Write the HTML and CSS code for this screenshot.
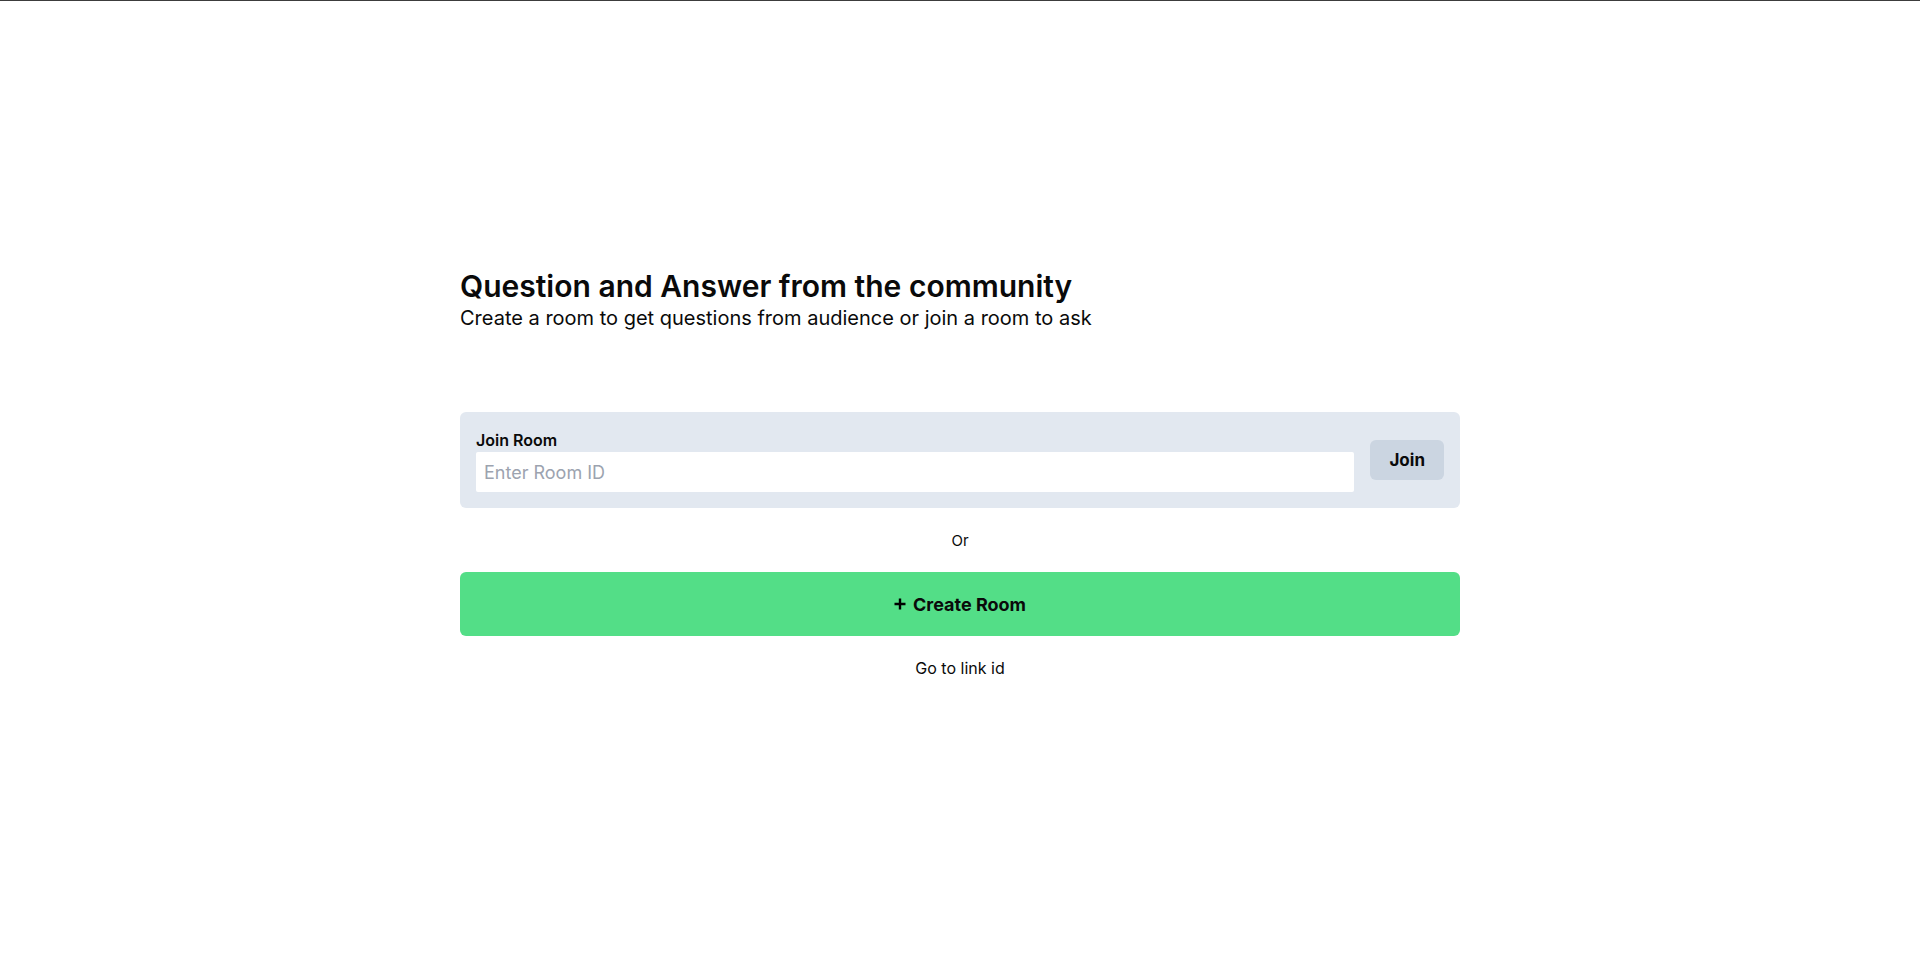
FILE: index.html
```html
<!DOCTYPE html>
<html lang="en">
<head>
<meta charset="utf-8">
<title>Q&amp;A</title>
<link rel="stylesheet" href="styles.css">
</head>
<body>
<main class="page">
  <div class="container">
    <header class="hero">
      <h1 class="title">Question and Answer from the community</h1>
      <p class="subtitle">Create a room to get questions from audience or join a room to ask</p>
    </header>
    <form class="card">
      <div class="field">
        <label class="label" for="room">Join Room</label>
        <input class="input" id="room" type="text" placeholder="Enter Room ID">
      </div>
      <button class="join" type="button">Join</button>
    </form>
    <p class="or">Or</p>
    <button class="create" type="button">
      <svg class="plus" width="12" height="12" viewBox="0 0 12 12"><path d="M6 0.5v11M0.5 6h11" stroke="#000" stroke-width="2.4" fill="none"/></svg>
      <span>Create Room</span>
    </button>
    <a class="link" href="#">Go to link id</a>
  </div>
</main>
</body>
</html>
```

FILE: styles.css
```css
* { box-sizing: border-box; }
html, body { margin: 0; padding: 0; }
body {
  border-top: 1px solid #3c3c3c;
  background: #fff;
  color: #0a0a0a;
  font-family: Inter, "Noto Sans", "Liberation Sans", sans-serif;
}
.page {
  min-height: 961px;
  display: flex;
  justify-content: center;
  padding-top: 267px;
}
.container {
  width: 1000px;
  display: flex;
  flex-direction: column;
}
.hero { margin-bottom: 80px; }
.title {
  margin: 0;
  font-size: 30px;
  line-height: 36px;
  font-weight: 600;
}
.subtitle {
  margin: 0;
  font-size: 20px;
  line-height: 28px;
}
.card {
  margin: 0;
  display: flex;
  align-items: center;
  gap: 16px;
  padding: 16px;
  background: #e2e8f0;
  border-radius: 6px;
}
.field { flex: 1; display: flex; flex-direction: column; }
.label {
  font-size: 16px;
  line-height: 24px;
  font-weight: 600;
}
.input {
  height: 40px;
  border: 0;
  border-radius: 2px;
  padding: 0 8px;
  font-family: inherit;
  font-size: 18px;
  background: #fff;
  outline: none;
}
.input::placeholder { color: #9ca3af; }
.join {
  height: 40px;
  padding: 0 19px;
  border: 0;
  border-radius: 6px;
  background: #cbd5e1;
  font-family: inherit;
  font-size: 17px;
  font-weight: 700;
  color: #0a0a0a;
}
.or {
  margin: 21px 0 19px;
  text-align: center;
  font-size: 15px;
  line-height: 24px;
}
.create {
  height: 64px;
  border: 0;
  border-radius: 6px;
  background: #53de87;
  display: flex;
  align-items: center;
  justify-content: center;
  gap: 7px;
  font-family: inherit;
  font-size: 18px;
  font-weight: 700;
  color: #0a0a0a;
}
.plus { display: block; }
.link {
  margin-top: 20px;
  align-self: center;
  font-size: 16px;
  line-height: 24px;
  color: #0a0a0a;
  text-decoration: none;
}
```
